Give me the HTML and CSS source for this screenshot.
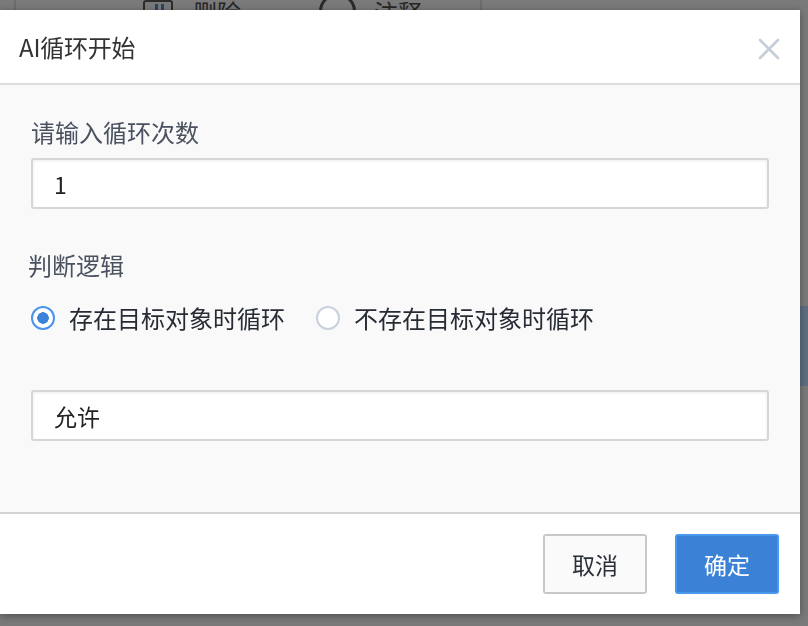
FILE: index.html
```html
<!DOCTYPE html>
<html lang="zh-CN">
<head>
    <meta charset="UTF-8">
    <meta name="viewport" content="width=device-width, initial-scale=1.0">
    <title>AI循环开始</title>
    <link rel="stylesheet" href="styles.css">
</head>
<body>

    <div class="page">
        <div class="toolbar">
            <span class="sep"></span>
            <span class="tool"><span class="tool-icon"></span><span class="tool-text">删除</span></span>
            <span class="tool"><span class="tool-ring"></span><span class="tool-text">注释</span></span>
            <span class="sep"></span>
        </div>
        <div class="side-tab"></div>
    </div>

    <div class="modal">
        <div class="modal-header">
            <h3 class="modal-title">AI循环开始</h3>
            <svg class="modal-close" width="22" height="22" viewBox="0 0 22 22">
                <path d="M2 2 L20 20 M20 2 L2 20" stroke="#c5cdd8" stroke-width="2.6" stroke-linecap="round"/>
            </svg>
        </div>
        <div class="modal-body">
            <label class="field-label" for="loopCount">请输入循环次数</label>
            <input class="field-input" type="text" id="loopCount" value="1">

            <div class="field-label logic">判断逻辑</div>
            <div class="radio-row">
                <label class="radio"><input type="radio" name="logic" checked><span class="dot"></span>存在目标对象时循环</label>
                <label class="radio"><input type="radio" name="logic"><span class="dot"></span>不存在目标对象时循环</label>
            </div>

            <input class="field-input allow" type="text" value="允许">
        </div>
        <div class="modal-footer">
            <button class="btn btn-cancel">取消</button>
            <button class="btn btn-ok">确定</button>
        </div>
    </div>

</body>
</html>
```

FILE: styles.css
```css
body {
    margin: 0;
    background: #7a7a7a;
    font-family: "Noto Sans CJK SC", "Noto Sans", sans-serif;
    overflow: hidden;
}
.page {
    height: 626px;
}
.toolbar {
    display: flex;
    height: 10px;
    overflow: hidden;
    align-items: flex-end;
}
.sep {
    width: 2px;
    height: 10px;
    background: #6c6c6c;
    margin-left: 14px;
}
.sep:last-child {
    margin-left: 58px;
}
.tool {
    display: flex;
    align-items: flex-end;
    margin-left: 127px;
    margin-bottom: -16px;
}
.tool + .tool {
    margin-left: 78px;
}
.tool-icon {
    width: 30px;
    height: 26px;
    box-sizing: border-box;
    border: 2px solid #2c2c2c;
    border-radius: 3px;
    background: linear-gradient(#2e4466, #2e4466) 10px 2px / 3px 10px no-repeat,
                linear-gradient(#2e4466, #2e4466) 16px 2px / 3px 10px no-repeat;
}
.tool-ring {
    width: 37px;
    height: 37px;
    box-sizing: border-box;
    border: 3px solid #2a2a2a;
    border-radius: 50%;
    margin-bottom: -4px;
}
.tool-text {
    font-size: 24px;
    line-height: 28px;
    color: #262626;
    margin-left: 20px;
}
.tool + .tool .tool-text {
    margin-left: 18px;
}
.side-tab {
    margin: 296px 0 0 800px;
    height: 80px;
    background: #5e6e80;
}

.modal {
    position: fixed;
    left: 0;
    top: 10px;
    width: 800px;
    height: 604px;
    background: #fff;
    display: flex;
    flex-direction: column;
    box-shadow: 0 2px 8px rgba(0, 0, 0, 0.35);
}
.modal-header {
    height: 73px;
    flex-shrink: 0;
    display: flex;
    align-items: center;
    justify-content: space-between;
    padding: 0 20px 0 19px;
    border-bottom: 2px solid #dcdcdc;
}
.modal-title {
    margin: 0;
    font-size: 24px;
    font-weight: normal;
    color: #333;
    letter-spacing: -0.2px;
}
.modal-close {
    margin-top: 4px;
}
.modal-body {
    flex: 1;
    background: #f9f9f9;
    padding: 32px 31px 0 31px;
    border-bottom: 2px solid #d2d2d2;
}
.field-label {
    display: block;
    font-size: 24px;
    line-height: 30px;
    color: #4a5260;
}
.field-input {
    display: block;
    box-sizing: border-box;
    width: 738px;
    height: 51px;
    margin-top: 11px;
    padding: 0 21px;
    border: 2px solid #d6d6d6;
    border-radius: 3px;
    background: #fff;
    box-shadow: inset 0 1px 3px rgba(0, 0, 0, 0.08);
    font-family: "Noto Sans CJK SC", "Noto Sans", sans-serif;
    font-size: 23px;
    color: #222;
}
.logic {
    margin-top: 41px;
    margin-left: -3px;
}
.radio-row {
    display: flex;
    gap: 31px;
    margin-top: 23px;
}
.radio {
    display: flex;
    align-items: center;
    font-size: 24px;
    line-height: 30px;
    color: #262b34;
}
.radio input {
    display: none;
}
.dot {
    width: 24px;
    height: 24px;
    box-sizing: border-box;
    border: 2px solid #c9d1dc;
    border-radius: 50%;
    background: #fff;
    margin-right: 14px;
    margin-left: 0;
}
.radio input:checked + .dot {
    border: 2.5px solid #4a94ec;
    background: radial-gradient(circle, #3b82d9 0, #3b82d9 5.5px, #fff 6px);
}
.allow {
    margin-top: 57px;
}
.modal-footer {
    height: 100px;
    flex-shrink: 0;
    display: flex;
    justify-content: flex-end;
    align-items: flex-start;
    gap: 28px;
    padding: 20px 21px 0 0;
    box-sizing: border-box;
}
.btn {
    height: 60px;
    width: 104px;
    border-radius: 3px;
    font-family: "Noto Sans CJK SC", "Noto Sans", sans-serif;
    font-size: 23px;
    cursor: pointer;
}
.btn-cancel {
    background: #fafafa;
    border: 2px solid #c8c8c8;
    color: #2a2f38;
}
.btn-ok {
    background: #3b82d6;
    border: 2px solid #4a98ee;
    color: #fff;
}
```
